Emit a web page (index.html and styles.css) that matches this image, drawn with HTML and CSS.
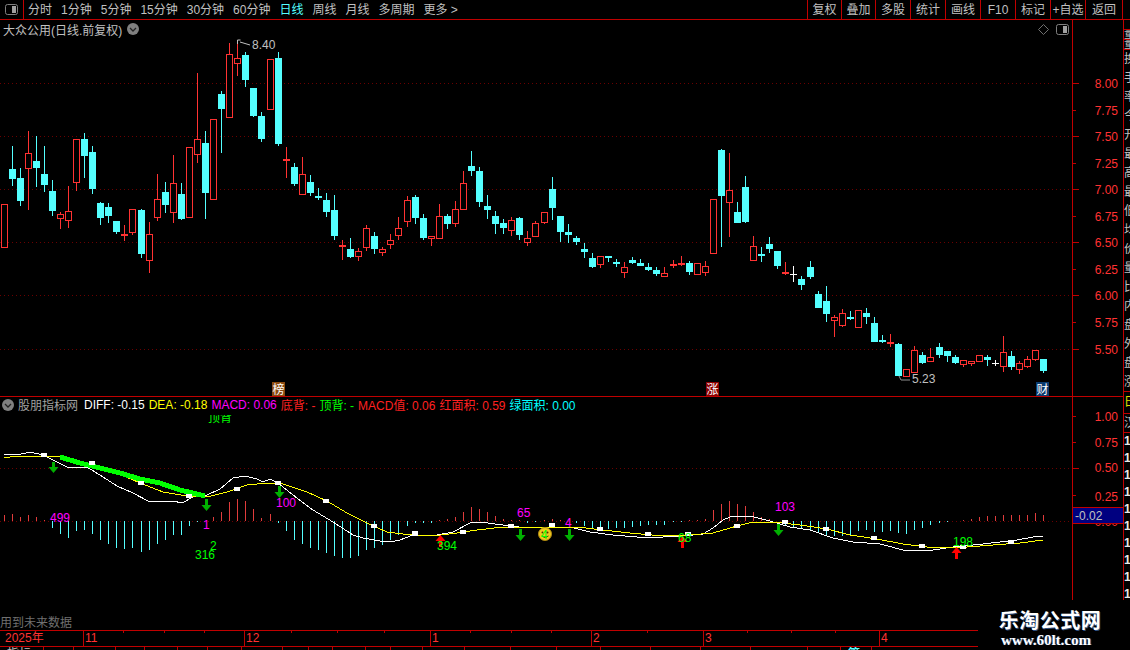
FILE: index.html
```html
<!DOCTYPE html>
<html lang="zh-CN">

<head>
    <meta charset="UTF-8">
    <title>大众公用 日线</title>
    <link rel="stylesheet" href="styles.css">
</head>

<body>
    <div class="topbar">
        <div class="tab-icon">
            <svg class="panel-icon" viewBox="0 0 13 11"><rect x="0.5" y="0.5" width="12" height="10" rx="2"></rect><rect class="fill" x="7" y="2" width="4" height="7"></rect></svg>
        </div>
        <div class="periods">
            <span>分时</span>
            <span>1分钟</span>
            <span>5分钟</span>
            <span>15分钟</span>
            <span>30分钟</span>
            <span>60分钟</span>
            <span class="active">日线</span>
            <span>周线</span>
            <span>月线</span>
            <span>多周期</span>
            <span>更多 &gt;</span>
        </div>
        <div class="tools">
            <span>复权</span>
            <span>叠加</span>
            <span>多股</span>
            <span>统计</span>
            <span>画线</span>
            <span>F10</span>
            <span>标记</span>
            <span>+自选</span>
            <span>返回</span>
        </div>
    </div>

    <div class="workspace">
        <div class="panes">
            <div class="pane pane-main">
                <div class="plot">
                    <div class="pane-head">
                        <span class="stock">大众公用(日线.前复权)</span>
                        <span class="round-btn"><svg viewBox="0 0 12 12"><path d="M3 5l3 3 3-3"></path></svg></span>
                        <span class="head-right">
                            <svg class="diamond" viewBox="0 0 11 11"><path d="M5.5 0.5l5 5-5 5-5-5z"></path></svg>
                            <svg class="panel-icon" viewBox="0 0 13 11"><rect x="0.5" y="0.5" width="12" height="10" rx="2"></rect><rect class="fill" x="7" y="2" width="4" height="7"></rect></svg>
                        </span>
                    </div>
                    <svg id="candles" class="chart" viewBox="0 39 1072 357"></svg>
                </div>
                <svg id="price-axis" class="axis" viewBox="1073 20 50 376"></svg>
            </div>

            <div class="pane pane-sub">
                <div class="plot">
                    <div class="pane-head">
                        <span class="round-btn"><svg viewBox="0 0 12 12"><path d="M3 5l3 3 3-3"></path></svg></span>
                        <span class="indicator">股朋指标网</span>
                        <span class="white">DIFF: -0.15</span>
                        <span class="yellow">DEA: -0.18</span>
                        <span class="magenta">MACD: 0.06</span>
                        <span class="red">底背: -</span>
                        <span class="green">顶背: -</span>
                        <span class="red">MACD值: 0.06</span>
                        <span class="red">红面积: 0.59</span>
                        <span class="cyan">绿面积: 0.00</span>
                    </div>
                    <svg id="macd" class="chart" viewBox="0 415 1072 185"></svg>
                </div>
                <svg id="macd-axis" class="axis" viewBox="1073 397 50 203"></svg>
            </div>
        </div>

        <div class="strip" id="strip"></div>
    </div>

    <div class="footer">
        <div class="timeline">
            <div class="note">用到未来数据</div>
            <div class="xaxis">
                <div class="month">2025年</div>
                <div class="month">11<div class="ticks"><i></i><i></i><i></i></div></div>
                <div class="month">12<div class="ticks"><i></i><i></i><i></i></div></div>
                <div class="month">1<div class="ticks"><i></i><i></i><i></i></div></div>
                <div class="month">2<div class="ticks"><i></i></div></div>
                <div class="month">3<div class="ticks"><i></i><i></i><i></i></div></div>
                <div class="month">4</div>
            </div>
            <div class="cells" id="cells"></div>
        </div>
        <div class="watermark">
            <div class="wm-name">乐淘公式网</div>
            <div class="wm-url">www.60lt.com</div>
        </div>
    </div>

    <script src="script.js"></script>
</body>

</html>
```

FILE: styles.css
```css
* {
    margin: 0;
    padding: 0;
    box-sizing: border-box;
}

body {
    width: 1130px;
    height: 650px;
    overflow: hidden;
    background: #000;
    color: #c0c0c0;
    font-family: "Liberation Sans", "Noto Sans CJK SC", sans-serif;
    font-size: 12px;
}

/* Top bar */
.topbar {
    display: flex;
    align-items: stretch;
    height: 20px;
    border-bottom: 1px solid #c00000;
    line-height: 21px;
}

.tab-icon {
    display: flex;
    align-items: center;
    justify-content: center;
    width: 24px;
    border-right: 1px solid #c00000;
}

.panel-icon {
    width: 13px;
    height: 11px;
}

.panel-icon rect {
    fill: none;
    stroke: #808080;
}

.panel-icon .fill {
    fill: #a0a0a0;
    stroke: none;
}

.periods {
    display: flex;
    gap: 9px;
    margin-left: 4px;
}

.periods .active {
    color: #54ffff;
}

.tools {
    display: flex;
    margin-left: auto;
    margin-right: 7px;
    border-left: 1px solid #c00000;
}

.tools span {
    width: 35px;
    text-align: center;
    border-right: 1px solid #c00000;
}

.tools span:nth-child(1),
.tools span:nth-child(2) {
    width: 34px;
}

.tools span:last-child {
    width: 37px;
}

/* Panes */
.workspace {
    display: flex;
    height: 580px;
}

.panes {
    width: 1124px;
    border-right: 1px solid #c00000;
}

.pane {
    display: flex;
}

.pane-main {
    height: 377px;
    border-bottom: 1px solid #c00000;
}

.pane-sub {
    height: 203px;
}

.plot {
    display: flex;
    flex-direction: column;
    width: 1073px;
    border-right: 1px solid #c00000;
}

.pane-head {
    display: flex;
    align-items: center;
    gap: 4px;
    flex: none;
}

.pane-main .pane-head {
    height: 19px;
    padding: 0 0 1px 3px;
}

.pane-sub .pane-head {
    height: 18px;
    padding: 0 0 3px 2px;
}

.round-btn {
    display: flex;
    width: 12px;
    height: 12px;
    border-radius: 50%;
    background: #808080;
}

.round-btn path {
    fill: none;
    stroke: #222;
    stroke-width: 1.3;
}

.stock {
    margin-right: 1px;
}

.head-right {
    display: flex;
    align-items: center;
    gap: 7px;
    margin-left: auto;
    margin-right: 3px;
}

.diamond {
    width: 11px;
    height: 11px;
}

.diamond path {
    fill: none;
    stroke: #707070;
}

.indicator {
    margin-right: 2px;
    color: #a0a0a0;
}

.white { color: #fff; }
.yellow { color: #ffff00; }
.magenta { color: #ff00ff; }
.red { color: #ff2020; }
.green { color: #00ff00; }
.cyan { color: #00ffff; }

.chart {
    display: block;
    width: 1072px;
    flex: 1;
    min-height: 0;
}

.axis {
    display: block;
    width: 50px;
    height: 100%;
}

.chart text,
.axis text {
    font-family: "Liberation Sans", "Noto Sans CJK SC", sans-serif;
    font-size: 12px;
}

/* Cut-off column at the right edge */
.strip {
    flex: 1;
    overflow: hidden;
    display: flex;
    flex-direction: column;
}

.strip span {
    display: block;
    flex: none;
    height: 19px;
    line-height: 18px;
    white-space: nowrap;
}

.strip .cut {
    height: 10px;
    line-height: 9px;
    border-bottom: 1px solid #c00000;
    overflow: hidden;
}

.strip .boxed {
    border-bottom: 1px solid #c00000;
}

.strip .gold {
    color: #e0e000;
    height: 22px;
    line-height: 21px;
    border-bottom: 1px solid #c00000;
}

.strip .digit {
    height: 17px;
    line-height: 17px;
    color: #e8e8e8;
    font-weight: bold;
}

/* Footer */
.footer {
    display: flex;
    height: 50px;
}

.timeline {
    width: 978px;
}

.note {
    display: flex;
    align-items: flex-end;
    height: 30px;
    color: #707070;
    line-height: 13px;
}

.xaxis {
    display: grid;
    grid-template-columns: 83px 161px 186px 161px 112px 176px 1fr;
    height: 17px;
    border-top: 1px solid #c00000;
    border-bottom: 1px solid #c00000;
    color: #ff3232;
    line-height: 15px;
}

.month {
    position: relative;
    padding-left: 1px;
    border-left: 1px solid #c00000;
}

.month:first-child {
    padding-left: 5px;
    border-left: none;
}

.ticks {
    position: absolute;
    top: 0;
    left: 0;
    right: 0;
    display: flex;
    justify-content: space-evenly;
}

.ticks i {
    width: 1px;
    height: 2px;
    background: #c00000;
}

.cells {
    display: flex;
    height: 3px;
    overflow: hidden;
}

.cells span {
    flex: none;
    padding-left: 7px;
    border-right: 1px solid #c00000;
    line-height: 14px;
    color: #c0c0c0;
}

.cells .cyan {
    color: #54ffff;
}

.watermark {
    flex: 1;
    padding: 8px 8px 0 0;
    text-align: center;
    background: #000;
    color: #fff;
}

.wm-name {
    font-family: "Noto Sans CJK SC", sans-serif;
    font-size: 20px;
    font-weight: bold;
    line-height: 24px;
    letter-spacing: 0.5px;
    text-shadow: 1px 1px 0 #305080;
}

.wm-url {
    margin-top: 1px;
    padding-right: 8px;
    font-family: "Liberation Serif", serif;
    font-size: 15px;
    font-weight: bold;
    line-height: 15px;
    text-shadow: 1px 0 0 #305080;
}
```

FILE: script.js
```js
var RED = "#ff3232";
var CYAN = "#54ffff";
var GRID = "#6a0000";

// [type, high, body top, body bottom, low], screen y values
var candles = [
    ["r",204,204,248,248],["c",146,169,179,186],["c",168,178,201,206],["r",131,153,169,210],["c",136,161,168,187],
    ["c",146,174,185,192],["c",180,191,211,216],["r",212,214,219,229],["r",186,211,221,228],["r",139,139,183,191],
    ["c",133,139,156,178],["c",146,152,189,194],["c",202,203,218,225],["c",203,207,216,223],["c",221,221,232,234],
    ["r",225,234,234,241],["r",209,209,233,235],["c",209,210,254,258],["r",222,234,261,273],["r",174,199,218,221],
    ["c",182,192,205,213],["r",155,183,213,223],["c",183,194,219,220],["r",147,147,218,218],["r",73,139,155,163],
    ["c",131,143,193,219],["r",119,119,200,200],["c",91,94,109,153],["r",43,54,118,118],["r",43,58,64,76],
    ["c",52,55,80,87],["c",88,88,116,117],["c",112,116,139,142],["r",59,59,110,110],["c",52,58,144,146],
    ["r",147,159,159,178],["c",163,167,184,186],["r",157,174,195,195],["c",175,182,193,196],["c",188,196,196,200],
    ["c",193,200,212,217],["c",195,210,236,240],["r",240,245,245,260],["c",238,249,257,258],["r",248,251,257,261],
    ["r",225,228,248,251],["c",232,236,249,254],["r",247,249,253,256],["r",234,240,245,249],["r",217,228,236,240],
    ["r",196,200,222,227],["c",195,197,218,224],["c",214,218,238,240],["r",236,236,239,246],["r",204,216,239,239],
    ["c",214,216,224,229],["r",201,209,224,227],["r",171,183,210,210],["c",151,166,171,176],["c",167,171,202,207],
    ["c",195,206,210,219],["c",211,216,224,234],["c",219,223,228,234],["r",217,220,231,236],["c",217,218,235,240],
    ["r",231,238,243,246],["r",221,223,237,237],["r",212,212,223,224],["c",177,189,208,220],["c",216,216,232,242],
    ["c",224,232,235,243],["c",236,238,242,245],["c",243,249,252,258],["c",253,258,267,268],["r",256,256,265,268],
    ["c",256,256,256,262],["c",259,262,264,267],["r",262,267,273,278],["c",257,260,263,264],["c",259,263,266,266],
    ["c",263,267,270,271],["c",267,270,274,276],["r",267,273,277,277],["r",260,264,264,268],["r",256,263,263,266],
    ["c",261,263,272,275],["r",263,263,275,275],["r",261,266,273,276],["r",199,199,254,254],["c",149,150,196,247],
    ["r",153,190,203,237],["c",202,212,223,223],["c",176,187,222,223],["r",236,246,261,261],["c",247,254,254,262],
    ["c",237,244,249,253],["c",251,251,266,269],["r",262,272,272,275],["w",266,274,274,282],["c",276,279,285,290],
    ["c",261,267,277,279],["c",291,294,308,308],["c",286,301,314,322],["r",315,317,321,337],["r",309,313,326,327],
    ["c",311,317,319,320],["r",310,310,328,328],["c",308,313,317,324],["c",317,323,342,342],["c",335,340,340,343],
    ["r",334,342,342,347],["c",343,344,376,376],["r",369,369,377,377],["r",346,350,373,373],["c",352,355,363,364],
    ["r",348,357,362,362],["c",343,347,355,358],["c",351,351,356,362],["c",355,357,363,364],["r",360,360,365,367],
    ["r",361,361,364,366],["r",355,355,362,362],["c",355,357,360,366],["w",360,363,363,366],["r",336,352,367,372],
    ["c",351,356,367,370],["r",361,363,370,374],["r",356,359,367,368],["r",350,350,360,361],["c",359,359,371,373]
];

// end of each MACD bar, 0 means no bar
var hist = [
    515,514,517,515,517,520,528,534,538,531,530,534,540,544,548,549,548,552,550,544,
    540,535,535,526,522,0,517,512,502,499,501,509,518,514,523,531,540,544,548,550,
    553,556,558,558,556,550,548,545,540,535,526,523,523,523,520,519,517,512,507,509,
    512,516,519,520,520,523,522,520,519,520,0,523,526,528,529,529,528,528,527,526,
    525,525,525,522,522,520,520,519,510,504,501,504,506,512,517,519,0,525,527,529,
    530,533,535,536,536,535,531,530,532,532,531,533,534,530,528,525,523,522,0,520,
    519,517,516,516,515,515,515,515,513,515
];

var diff = [[4,454],[17,455],[30,452],[43,455],[57,462],[69,468],[75,467],[87,467],[103,477],[117,486],[133,493],[148,501],[163,502],[173,501],[182,503],[193,497],[207,495],[220,489],[233,478],[245,476],[257,479],[263,482],[270,479],[278,483],[293,495],[313,510],[333,522],[353,535],[363,538],[380,541],[390,542],[400,540],[413,535],[437,535],[453,532],[470,523],[480,522],[503,525],[527,528],[547,527],[570,527],[590,532],[613,535],[637,537],[663,537],[683,536],[703,534],[713,528],[723,520],[730,517],[750,516],[770,521],[790,527],[810,530],[833,538],[853,542],[880,544],[907,551],[933,550],[953,547],[983,544],[1017,540],[1033,537],[1043,536]];

var dea = [[4,458],[17,456],[43,456],[60,457],[80,463],[93,465],[117,473],[140,483],[163,492],[187,496],[207,497],[227,492],[247,485],[267,483],[283,484],[307,492],[327,501],[347,513],[367,523],[387,532],[403,534],[433,536],[457,533],[477,530],[503,527],[527,527],[547,527],[577,527],[603,530],[630,533],[663,536],[690,535],[713,533],[737,526],[753,522],[773,522],[800,525],[827,529],[850,535],[877,539],[903,544],[927,547],[950,548],[967,547],[993,545],[1020,543],[1043,540]];

var thick = [[60,457],[80,463],[100,468],[120,473],[140,479],[160,483],[180,490],[205,496]];

var squares = [[44,455],[92,463],[141,483],[189,496],[237,489],[278,483],[326,501],[374,526],[415,533],[463,532],[511,526],[552,525],[600,529],[648,534],[688,534],[737,526],[785,522],[826,529],[874,538],[922,546],[963,547],[1011,542]];

// candle columns drift one pixel at these indexes
var drift = [17, 33, 50, 67, 83, 100, 116];

function col(i) {
    var extra = 0;
    for (var d = 0; d < drift.length; d++) {
        if (i >= drift[d]) extra++;
    }
    return 4 + 8 * i + extra;
}

function line(x1, y1, x2, y2, color) {
    return '<line x1="' + x1 + '" y1="' + y1 + '" x2="' + x2 + '" y2="' + y2 + '" stroke="' + color + '"></line>';
}

function rect(x, y, w, h, fill) {
    return '<rect x="' + x + '" y="' + y + '" width="' + w + '" height="' + h + '" fill="' + fill + '"></rect>';
}

function label(x, y, text, color) {
    return '<text x="' + x + '" y="' + y + '" fill="' + color + '">' + text + '</text>';
}

function dotted(y) {
    return '<line x1="0" y1="' + (y + 0.5) + '" x2="1072" y2="' + (y + 0.5) + '" stroke="' + GRID + '" stroke-dasharray="1 3"></line>';
}

function poly(points, color, width) {
    return '<polyline fill="none" stroke="' + color + '" stroke-width="' + width + '" points="' + points.join(" ") + '"></polyline>';
}

function downArrow(x, top, bottom) {
    var c = "#00b000";
    return rect(x - 1, top, 3, bottom - top - 5, c) +
        '<polygon fill="' + c + '" points="' + (x - 4.5) + ',' + (bottom - 6) + ' ' + (x + 5.5) + ',' + (bottom - 6) + ' ' + (x + 0.5) + ',' + bottom + '"></polygon>';
}

function upArrow(x, top, bottom) {
    var c = "#ff0000";
    return rect(x - 1, top + 5, 3, bottom - top - 5, c) +
        '<polygon fill="' + c + '" points="' + (x - 4.5) + ',' + (top + 6) + ' ' + (x + 5.5) + ',' + (top + 6) + ' ' + (x + 0.5) + ',' + top + '"></polygon>';
}

function badge(x, text, color) {
    return rect(x, 382, 13, 14, color) +
        '<text x="' + (x + 0.5) + '" y="394" fill="#fff">' + text + '</text>';
}

function drawCandles() {
    var html = '<g shape-rendering="crispEdges">';
    [83, 136, 189, 242, 295, 349].forEach(function (y) {
        html += dotted(y);
    });
    candles.forEach(function (c, i) {
        var x = col(i);
        var color = c[0] == "r" ? RED : c[0] == "c" ? CYAN : "#fff";
        var mid = x + 0.5;
        if (c[2] == c[3]) {
            // doji, wick plus a flat body
            html += line(mid, c[1], mid, c[4], color);
            html += rect(x - 3, c[2], 7, c[0] == "w" ? 1 : 2, color);
            return;
        }
        if (c[1] < c[2]) html += line(mid, c[1], mid, c[2], color);
        if (c[4] > c[3]) html += line(mid, c[3], mid, c[4], color);
        if (c[0] == "r") {
            html += '<rect x="' + (x - 2.5) + '" y="' + (c[2] + 0.5) + '" width="6" height="' + (c[3] - c[2] - 1) + '" fill="#000" stroke="' + RED + '"></rect>';
        } else {
            html += rect(x - 3, c[2], 7, c[3] - c[2], color);
        }
    });
    html += '</g>';

    // high and low marks
    html += '<path d="M237.5 40v4M237.5 40h3M240 42l10 3" fill="none" stroke="#c0c0c0"></path>';
    html += label(252, 49, "8.40", "#c0c0c0");
    html += '<path d="M899 376l2 4h9" fill="none" stroke="#909090"></path>';
    html += label(912, 383, "5.23", "#c0c0c0");

    html += badge(272, "榜", "#8a4a10");
    html += badge(706, "涨", "#8b0000");
    html += badge(1036, "财", "#0a3a6e");
    document.getElementById("candles").innerHTML = html;
}

function drawMacd() {
    var html = '<g shape-rendering="crispEdges">';
    html += dotted(468) + dotted(521);
    hist.forEach(function (y, i) {
        if (!y) return;
        var x = col(i) + 0.5;
        html += line(x, 521, x, y, y < 521 ? "#e03c3c" : CYAN);
    });
    html += poly(diff, "#fff", 1);
    html += poly(dea, "#ffff00", 1);
    html += poly(thick, "#00ff00", 5);
    squares.forEach(function (s) {
        html += rect(s[0] - 3, s[1] - 2, 6, 4, "#fff");
    });
    html += '</g>';

    html += downArrow(53, 462, 473) + downArrow(206, 499, 511) + downArrow(279, 486, 498);
    html += downArrow(520, 529, 541) + downArrow(569, 529, 541) + downArrow(778, 524, 536);
    html += upArrow(440, 535, 547) + upArrow(682, 536, 548) + upArrow(956, 547, 559);

    // smiley
    html += '<circle cx="545" cy="534" r="6.5" fill="#f2c81e" stroke="#b08a10"></circle>';
    html += '<circle cx="542.5" cy="532.5" r="1" fill="#503000"></circle><circle cx="547.5" cy="532.5" r="1" fill="#503000"></circle>';
    html += '<path d="M541.5 536q3.5 3 7 0" fill="none" stroke="#503000"></path>';

    html += label(50, 522, "499", "#ff00ff");
    html += label(203, 529, "1", "#ff00ff");
    html += label(276, 507, "100", "#ff00ff");
    html += label(517, 517, "65", "#ff00ff");
    html += label(565, 527, "4", "#ff00ff");
    html += label(775, 511, "103", "#ff00ff");
    html += label(208, 422, "顶背", "#00ff00");
    html += label(195, 559, "316", "#00ff00");
    html += label(210, 550, "2", "#00ff00");
    html += label(437, 550, "394", "#00ff00");
    html += label(541, 539, "4", "#00ff00");
    html += label(678, 542, "68", "#00ff00");
    html += label(953, 546, "198", "#00ff00");
    document.getElementById("macd").innerHTML = html;
}

function axisRow(y, text, long, textY) {
    var html = line(1073, y + 0.5, long ? 1079 : 1076, y + 0.5, "#c00000");
    html += '<text x="1118" y="' + textY + '" fill="' + RED + '" text-anchor="end">' + text + '</text>';
    return html;
}

function drawAxes() {
    var html = "";
    var prices = ["8.00", "7.75", "7.50", "7.25", "7.00", "6.75", "6.50", "6.25", "6.00", "5.75", "5.50"];
    var ys = [83, 110, 136, 163, 189, 216, 242, 269, 295, 322, 349];
    prices.forEach(function (p, i) {
        html += axisRow(ys[i], p, i % 2 == 0, ys[i] + 5);
    });
    document.getElementById("price-axis").innerHTML = html;

    html = axisRow(416, "1.00", false, 421) + axisRow(442, "0.75", false, 447) + axisRow(468, "0.50", true, 472) + axisRow(495, "0.25", false, 501);
    html += '<text x="1118" y="526" fill="' + RED + '" text-anchor="end">0.00</text>';
    html += rect(1073, 507, 50, 16, "#000080") + line(1073, 507.5, 1123, 507.5, "#c00000") + line(1073, 523.5, 1123, 523.5, "#c00000");
    html += '<text x="1075" y="520" fill="#c0c0c0">-0.02</text>';
    document.getElementById("macd-axis").innerHTML = html;
}

function drawStrip() {
    var html = '<span class="cut"></span><span class="cut">量</span><span class="cut">量</span>';
    var rows = "换手率今开最高最低均价量比内盘外盘涨跌振幅".split("");
    for (var i = 0; i < 18; i++) {
        html += '<span' + (i == 17 ? ' class="boxed"' : '') + '>' + rows[i] + '</span>';
    }
    html += '<span class="gold">日</span><span class="boxed">汉</span>';
    for (i = 0; i < 10; i++) {
        html += '<span class="digit">1</span>';
    }
    document.getElementById("strip").innerHTML = html;
}

function drawCells() {
    var ends = [43, 73, 115, 144, 177, 207, 241, 282, 308, 332, 365, 390, 422, 464, 510, 556, 600, 650, 700, 750, 807, 840, 871];
    var names = {0: "指标", 1: "+", 21: "　+", 22: '<b class="cyan">筹码</b>'};
    var html = "";
    var last = 0;
    ends.forEach(function (x, i) {
        html += '<span style="width:' + (x - last + 1) + 'px">' + (names[i] || "") + '</span>';
        last = x + 1;
    });
    document.getElementById("cells").innerHTML = html;
}

drawCandles();
drawMacd();
drawAxes();
drawStrip();
drawCells();
```
